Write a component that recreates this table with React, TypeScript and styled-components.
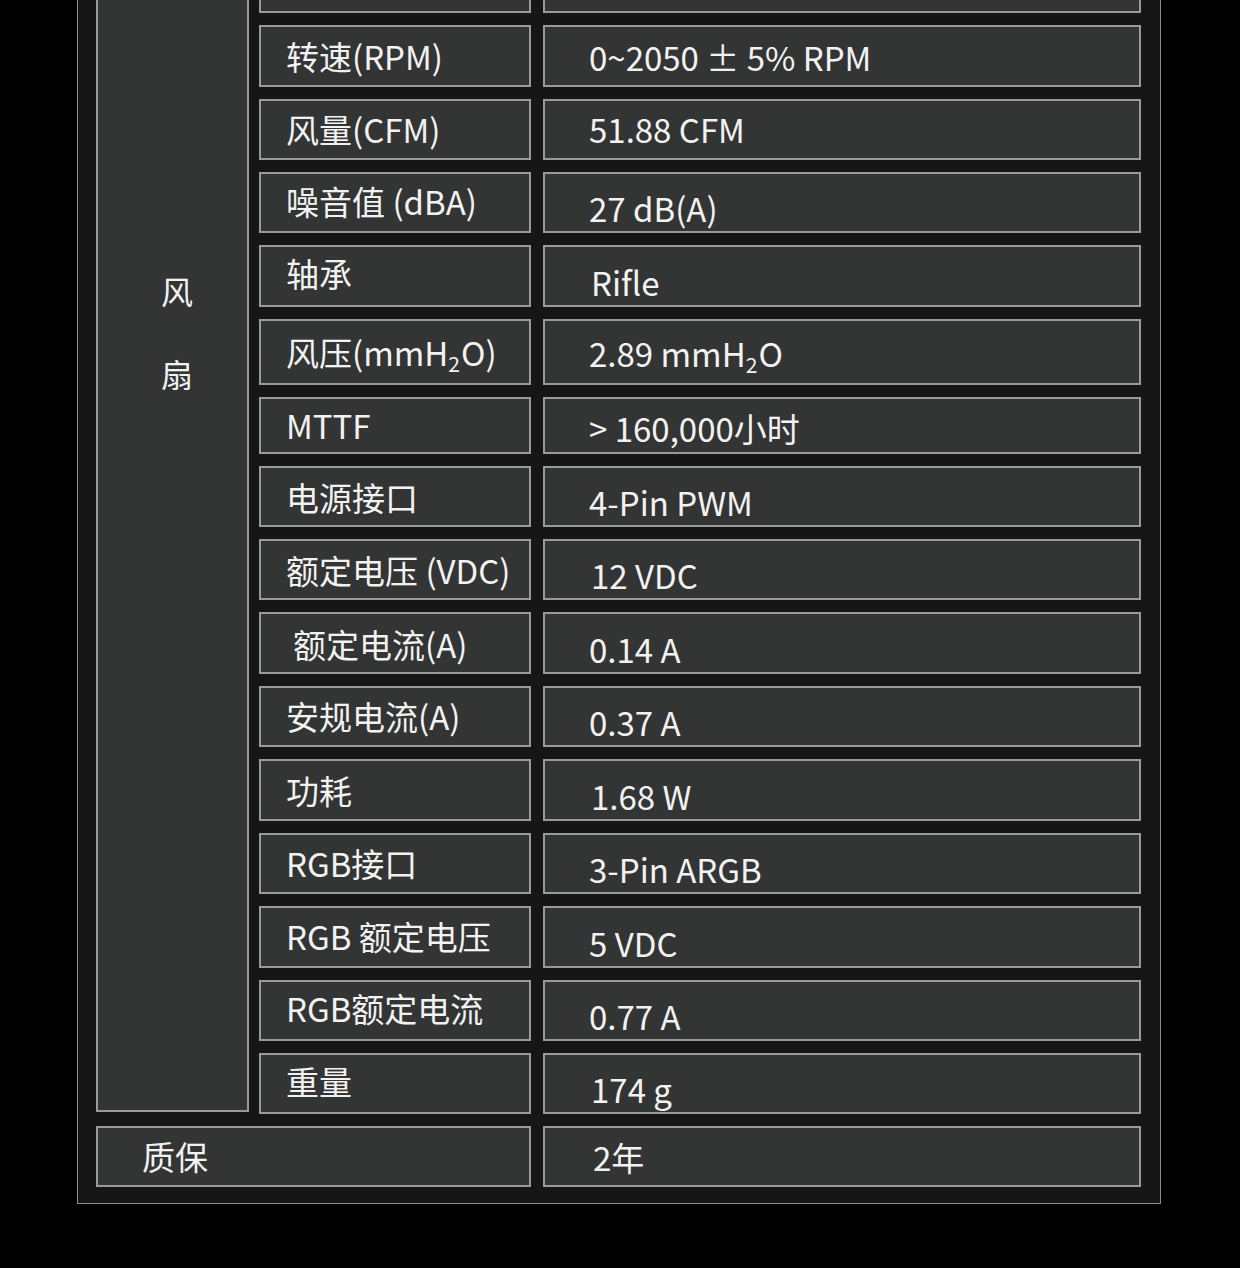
import React from "react";
import styled, { createGlobalStyle } from "styled-components";

const GlobalStyle = createGlobalStyle`
  html, body {
    margin: 0;
    padding: 0;
    background: #000;
    overflow: hidden;
  }
  body {
    font-family: "Noto Sans CJK SC", "Noto Sans", sans-serif;
    color: #f2f2f2;
  }
`;

interface SpecRow {
  label: React.ReactNode;
  value: React.ReactNode;
  height: number;
  labelShift?: number;
  labelIndent?: number;
  valueShift?: number;
  valueIndent?: number;
}

const Panel = styled.div`
  width: 1045px;
  margin: -68px 0 0 77px;
  padding: 18px 19px 16px 18px;
  background: #161616;
  border: 1px solid #8c8c8c;
  display: flex;
  flex-direction: column;
  gap: 12px;
`;

const FanGroup = styled.div`
  display: flex;
  gap: 10px;
`;

const Cell = styled.div`
  box-sizing: border-box;
  background: #333434;
  border: 2px solid #9a9a9a;
  display: flex;
  align-items: center;
  font-size: 33px;
  line-height: 1;
  white-space: nowrap;
`;

const FanCell = styled(Cell)`
  width: 153px;
  flex: none;
  flex-direction: column;
  align-items: center;
  justify-content: flex-start;
  padding: 296px 0 0 9px;
  margin-bottom: 2px;
`;

const FanText = styled.div`
  font-size: 32px;
  line-height: 83px;
  text-align: center;
`;

const Rows = styled.div`
  display: flex;
  flex-direction: column;
  gap: 12px;
  flex: 1;
`;

const Row = styled.div<{ $h: number }>`
  display: grid;
  grid-template-columns: 272px 598px;
  column-gap: 12px;
  height: ${(p) => p.$h}px;
`;

const WarrantyRow = styled.div`
  display: grid;
  grid-template-columns: 435px 598px;
  column-gap: 12px;
  height: 61px;
`;

const Label = styled(Cell)<{ $shift?: number; $indent?: number }>`
  padding-left: ${(p) => 25 + (p.$indent ?? 0)}px;
  padding-bottom: ${(p) => Math.max(0, -(p.$shift ?? 0)) * 2}px;
  padding-top: ${(p) => Math.max(0, p.$shift ?? 0) * 2}px;
`;

const Value = styled(Cell)<{ $shift?: number; $indent?: number }>`
  padding-left: ${(p) => 44 + (p.$indent ?? 0)}px;
  padding-top: ${(p) => (p.$shift ?? 6) * 2}px;
`;

const Sub = styled.span`
  display: inline-block;
  font-size: 0.64em;
  transform: translateY(0.55em);
  margin: 0 1px 0 0;
`;

const rows: SpecRow[] = [
  { label: "", value: "", height: 62 },
  { label: "转速(RPM)", value: "0~2050 ± 5% RPM", height: 62, valueShift: 1 },
  { label: "风量(CFM)", value: "51.88 CFM", height: 61, valueShift: 0 },
  { label: "噪音值 (dBA)", value: "27 dB(A)", height: 61, labelShift: -1 },
  { label: "轴承", value: "Rifle", height: 62, labelShift: -3, valueIndent: 2 },
  {
    label: (
      <>
        风压(mmH<Sub>2</Sub>O)
      </>
    ),
    value: (
      <>
        2.89 mmH<Sub>2</Sub>O
      </>
    ),
    height: 66,
    labelShift: 0,
    valueShift: 1,
  },
  { label: "MTTF", value: "> 160,000小时", height: 57, valueShift: 3 },
  { label: "电源接口", value: "4-Pin PWM", height: 61, labelShift: 1 },
  { label: "额定电压 (VDC)", value: "12 VDC", height: 61, labelShift: 1, valueIndent: 2 },
  { label: "额定电流(A)", value: "0.14 A", height: 62, labelShift: 1, labelIndent: 7 },
  { label: "安规电流(A)", value: "0.37 A", height: 61, labelShift: 0 },
  { label: "功耗", value: "1.68 W", height: 62, labelShift: 0, valueIndent: 2 },
  { label: "RGB接口", value: "3-Pin ARGB", height: 61, labelShift: 0 },
  { label: "RGB 额定电压", value: "5 VDC", height: 62, labelShift: -1 },
  { label: "RGB额定电流", value: "0.77 A", height: 61, labelShift: -2 },
  { label: "重量", value: "174 g", height: 61, labelShift: -2, valueIndent: 2 },
];

export default function App() {
  return (
    <>
      <GlobalStyle />
      <Panel>
        <FanGroup>
          <FanCell>
            <FanText>风</FanText>
            <FanText>扇</FanText>
          </FanCell>
          <Rows>
            {rows.map((r, i) => (
              <Row key={i} $h={r.height}>
                <Label $shift={r.labelShift} $indent={r.labelIndent}>
                  {r.label}
                </Label>
                <Value $shift={r.valueShift} $indent={r.valueIndent}>
                  {r.value}
                </Value>
              </Row>
            ))}
          </Rows>
        </FanGroup>
        <WarrantyRow>
          <Label $indent={19}>质保</Label>
          <Value $shift={1} $indent={4}>
            2年
          </Value>
        </WarrantyRow>
      </Panel>
    </>
  );
}
